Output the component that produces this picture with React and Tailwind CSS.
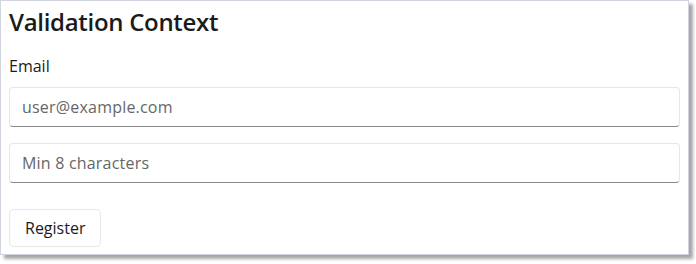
import React from 'react';

const font = { fontFamily: '"Open Sans", "Noto Sans", sans-serif' };

export default function App() {
  return (
    <div className="w-[696px] h-[264px] bg-white" style={font}>
      <div className="w-[689px] h-[255px] border border-[#cfd4de] bg-white shadow-[4px_4px_3px_rgba(0,0,0,0.35)] px-2 pt-[3px]">
        <h1 className="text-[24px] leading-[36px] font-semibold text-[#1b1b1b] tracking-[-0.3px]">Validation Context</h1>
        <label className="block mt-[16px] text-[16px] leading-[20px] text-[#1b1b1b]">Email</label>
        <div className="mt-[11px] flex flex-col gap-[16px]">
          <input
            className="h-[40px] w-full rounded-[4px] border border-[#e6e6e6] border-b-[#8a8a8a] px-[12px] text-[16px] tracking-[0.2px] text-[#1b1b1b] placeholder:text-[#666666] outline-none"
            placeholder="user@example.com"
          />
          <input
            type="password"
            className="h-[40px] w-full rounded-[4px] border border-[#e6e6e6] border-b-[#8a8a8a] px-[12px] text-[16px] tracking-[0.2px] text-[#1b1b1b] placeholder:text-[#666666] outline-none"
            placeholder="Min 8 characters"
          />
        </div>
        <button className="mt-[26px] h-[38px] px-[15px] rounded-[4px] border border-[#e8e8e8] bg-white text-[16px] text-[#1b1b1b]">
          Register
        </button>
      </div>
    </div>
  );
}
